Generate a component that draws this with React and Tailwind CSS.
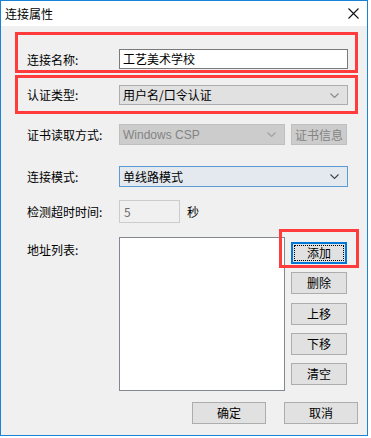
import React from "react";

const font = { fontFamily: '"Noto Sans CJK SC", "Liberation Sans", sans-serif' };

const Chevron = ({ color = "#444" }) => (
  <svg width="9" height="5" viewBox="0 0 9 5" className="shrink-0">
    <path d="M0.5 0.5 L4.5 4.5 L8.5 0.5" fill="none" stroke={color} strokeWidth="1.1" />
  </svg>
);

const Label = ({ children, className = "" }) => (
  <div className={`w-[92px] shrink-0 text-[12px] leading-none text-black ${className}`}>{children}</div>
);

const SideButton = ({ children, className = "" }) => (
  <button className={`h-[22px] w-[56px] border border-[#adadad] bg-[#e1e1e1] text-[12px] leading-none text-black ${className}`}>
    {children}
  </button>
);

export default function App() {
  return (
    <div className="h-[438px] w-[371px] bg-white" style={font}>
      <div className="flex h-[436px] w-[368px] flex-col border border-[#1883d7] bg-[#f0f0f0]">
        {/* title bar */}
        <div className="flex h-[25px] shrink-0 items-center justify-between bg-white pl-[4px] pr-[8px]">
          <span className="text-[12px] leading-none text-black">连接属性</span>
          <svg width="11" height="11" viewBox="0 0 11 11">
            <path d="M0.5 0.5 L10.5 10.5 M10.5 0.5 L0.5 10.5" stroke="#111" strokeWidth="1.1" />
          </svg>
        </div>

        <div className="flex flex-col pl-[14px]">
          {/* name */}
          <div className="mt-[6px] flex h-[41px] w-[343px] items-start border-[3px] border-[#ff3b3b] pl-[9px] pt-[14px]">
            <Label className="flex h-[20px] items-center pt-[2px]">连接名称:</Label>
            <div className="flex h-[20px] w-[229px] items-center border border-[#7a7a7a] bg-white pl-[3px] text-[12px] leading-none text-black">
              工艺美术学校
            </div>
          </div>

          {/* auth type */}
          <div className="mt-[2px] flex h-[39px] w-[343px] items-start border-[3px] border-[#ff3b3b] pl-[9px] pt-[7px]">
            <Label className="flex h-[20px] items-center">认证类型:</Label>
            <div className="flex h-[20px] w-[229px] items-center justify-between border border-[#adadad] bg-[#e1e1e1] pl-[3px] pr-[8px] text-[12px] leading-none text-black">
              <span>用户名/口令认证</span>
              <Chevron color="#888" />
            </div>
          </div>

          {/* certificate */}
          <div className="mt-[10px] flex h-[21px] items-center pl-[12px]">
            <Label>证书读取方式:</Label>
            <div className="flex h-[21px] w-[166px] items-center justify-between border border-[#bfbfbf] bg-[#cccccc] pl-[3px] pr-[8px] text-[12px] leading-none text-[#838383]">
              <span style={{ fontFamily: '"Liberation Sans", sans-serif' }}>Windows CSP</span>
              <Chevron color="#a0a0a0" />
            </div>
            <button className="ml-[6px] h-[21px] w-[56px] border border-[#bfbfbf] bg-[#cccccc] text-[12px] leading-none text-[#838383]">
              证书信息
            </button>
          </div>

          {/* mode */}
          <div className="mt-[21px] flex h-[21px] items-center pl-[12px]">
            <Label>连接模式:</Label>
            <div className="flex h-[21px] w-[229px] items-center justify-between border border-[#5b9bd5] bg-[#e3e9ef] pl-[3px] pr-[8px] text-[12px] leading-none text-black">
              <span>单线路模式</span>
              <Chevron color="#444" />
            </div>
          </div>

          {/* timeout */}
          <div className="mt-[13px] flex h-[23px] items-center pl-[12px]">
            <Label>检测超时时间:</Label>
            <div className="flex h-[23px] w-[61px] items-center border border-[#cccccc] bg-[#f0f0f0] pl-[4px] text-[12px] leading-none text-[#6d6d6d]">
              5
            </div>
            <span className="ml-[7px] text-[12px] leading-none text-black">秒</span>
          </div>

          {/* address list */}
          <div className="mt-[14px] flex items-start pl-[12px]">
            <Label className="pt-[7px]">地址列表:</Label>
            <div className="h-[154px] w-[166px] border border-[#828790] bg-white" />
            <div className="ml-[6px] flex flex-col">
              <div className="relative mt-[5px]">
                <button className="flex h-[22px] w-[56px] items-center justify-center border-2 border-[#0078d7] bg-[#e1e1e1] p-[1px] text-[12px] leading-none text-black">
                  <span className="flex h-full w-full items-center justify-center border border-dotted border-black">添加</span>
                </button>
                <div className="pointer-events-none absolute -left-[12px] -top-[13px] h-[39px] w-[80px] border-[3px] border-[#ff3b3b]" />
              </div>
              <SideButton className="mt-[8px]">删除</SideButton>
              <SideButton className="mt-[9px]">上移</SideButton>
              <SideButton className="mt-[8px]">下移</SideButton>
              <SideButton className="mt-[8px]">清空</SideButton>
            </div>
          </div>

          {/* footer */}
          <div className="mt-[11px] flex justify-end gap-[18px] pr-[9px]">
            <button className="h-[22px] w-[74px] border border-[#adadad] bg-[#e1e1e1] text-[12px] leading-none text-black">确定</button>
            <button className="h-[22px] w-[74px] border border-[#adadad] bg-[#e1e1e1] text-[12px] leading-none text-black">取消</button>
          </div>
        </div>
      </div>
    </div>
  );
}
